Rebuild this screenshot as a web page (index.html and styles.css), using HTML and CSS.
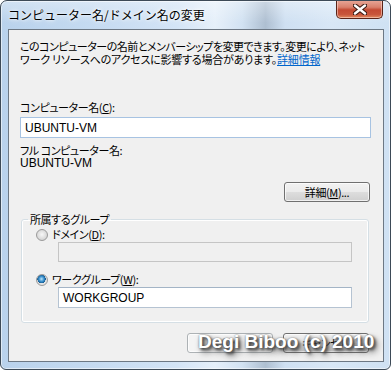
FILE: index.html
```html
<!DOCTYPE html>
<html lang="ja">
<head>
<meta charset="utf-8">
<link rel="stylesheet" href="styles.css">
</head>
<body>
<div class="window">
  <div class="titlebar">
    <span class="title">コンピューター名/ドメイン名の変更</span>
    <span class="close">
      <svg width="14" height="11" viewBox="0 0 14 11">
        <path d="M2 1.5 L12 9.5 M12 1.5 L2 9.5" stroke="#3d1b14" stroke-width="4.6" stroke-linecap="round"/>
        <path d="M2 1.5 L12 9.5 M12 1.5 L2 9.5" stroke="#ffffff" stroke-width="2.4" stroke-linecap="round"/>
      </svg>
    </span>
  </div>
  <div class="client">
    <p class="intro"><span class="line1">このコンピューターの名前とメンバーシップを変更できます。変更により、ネット</span><br><span class="line2">ワーク リソースへのアクセスに影響する場合があります。<a class="link">詳細情報</a></span></p>
    <div class="label name-label">コンピューター名(<u>C</u>):</div>
    <div class="textbox focused">UBUNTU-VM</div>
    <div class="label full-label">フル コンピューター名:</div>
    <div class="label value">UBUNTU-VM</div>
    <div class="more-row"><span class="btn more">詳細(<u>M</u>)...</span></div>
    <fieldset class="group">
      <legend class="legend">所属するグループ</legend>
      <div class="radio-row"><span class="radio"></span><span class="label">ドメイン(<u>D</u>):</span></div>
      <div class="textbox inset disabled"></div>
      <div class="radio-row second"><span class="radio checked"></span><span class="label">ワークグループ(<u>W</u>):</span></div>
      <div class="textbox inset">WORKGROUP</div>
    </fieldset>
    <div class="actions">
      <span class="btn disabled">OK</span>
      <span class="btn">キャンセル</span>
    </div>
  </div>
  <div class="watermark">Degi Biboo (c) 2010</div>
</div>
</body>
</html>
```
FILE: styles.css
```css
html, body {
  margin: 0;
  padding: 0;
  background: #ffffff;
}

.window {
  position: relative;
  width: 391px;
  height: 370px;
  box-sizing: border-box;
  border: 1px solid #3d4a57;
  border-radius: 7px 7px 6px 6px;
  padding: 0 6px 7px 7px;
  display: flex;
  flex-direction: column;
  background:
    linear-gradient(to bottom, rgba(255,255,255,0.35), rgba(255,255,255,0) 22px),
    linear-gradient(to right, #b9d2ec 0%, #c6dbf1 25%, #d3e4f6 45%, #e6f0fa 55%, #d2e2f2 62%, #aebfd1 68%, #cfe0f2 73%, #d8e7f6 85%, #cfe1f3 100%);
  box-shadow: inset 0 0 0 1px rgba(255,255,255,0.55);
  font-family: "Noto Sans CJK JP", "Noto Sans", sans-serif;
  overflow: hidden;
}

.titlebar {
  height: 28px;
  display: flex;
  justify-content: space-between;
  align-items: flex-start;
  flex: none;
}

.title {
  margin-top: 6px;
  font-size: 12px;
  line-height: 16px;
  color: #000;
  text-shadow: 0 0 6px #ffffff, 0 0 3px #ffffff;
}

.close {
  margin-top: -1px;
  margin-right: 1px;
  width: 47px;
  height: 19px;
  box-sizing: border-box;
  border: 1px solid #5a2418;
  border-top: none;
  border-radius: 0 0 5px 5px;
  background: linear-gradient(to bottom, #e9a99a 0%, #d9806c 40%, #c44a33 55%, #c8553b 80%, #e08a5e 100%);
  box-shadow: inset 0 0 0 1px rgba(255,220,210,0.55);
  display: flex;
  align-items: center;
  justify-content: center;
}

.client {
  flex: 1;
  min-width: 0;
  overflow: hidden;
  box-sizing: border-box;
  border: 1px solid #6d7884;
  background: #f0f0f0;
  padding: 10px 12px 0 11px;
  display: flex;
  flex-direction: column;
  font-size: 11px;
  line-height: 13px;
  letter-spacing: -0.4px;
  color: #000;
  font-feature-settings: "palt";
}

.intro {
  margin: 0;
  white-space: nowrap;
}

.line1 {
  letter-spacing: -0.5px;
}

.line2 {
  letter-spacing: -0.2px;
}

.link {
  color: #0066cc;
  text-decoration: underline;
}

.label {
  line-height: 13px;
}

.name-label {
  margin-top: 35px;
}

.textbox {
  height: 21px;
  box-sizing: border-box;
  margin-top: 3px;
  background: #ffffff;
  border: 1px solid #b5c3d2;
  border-top-color: #a3b4c6;
  padding: 3px 0 0 4px;
  font-family: "Liberation Sans", sans-serif;
  font-size: 12px;
  line-height: 14px;
  letter-spacing: 0;
}

.focused {
  border-color: #a7c3e2;
}

.full-label {
  margin-top: 6px;
}

.value {
  font-family: "Liberation Sans", sans-serif;
  font-size: 12px;
  letter-spacing: 0;
}

.more-row {
  display: flex;
  justify-content: flex-end;
  margin-top: 12px;
  padding-right: 1px;
}

.btn {
  width: 86px;
  height: 20px;
  box-sizing: border-box;
  border: 1px solid #707070;
  border-radius: 3px;
  background: linear-gradient(to bottom, #f2f2f2 0%, #ebebeb 48%, #dddddd 52%, #cfcfcf 100%);
  box-shadow: inset 0 0 0 1px rgba(255,255,255,0.7);
  display: flex;
  align-items: center;
  justify-content: center;
  line-height: 13px;
}

.btn.disabled {
  border-color: #adb2b5;
  background: #f4f4f4;
  color: #8c8c8c;
  font-family: "Liberation Sans", sans-serif;
  font-size: 12px;
  letter-spacing: 0;
}

.group {
  margin: 11px 2px 0 1px;
  padding: 0 0 14px 0;
  border: 1px solid #d5dfe5;
  border-radius: 3px;
  box-shadow: inset 0 0 0 1px #ffffff;
  min-width: 0;
}

.legend {
  margin-left: 6px;
  padding: 0 2px;
  line-height: 13px;
}

.radio-row {
  display: flex;
  align-items: center;
  gap: 4px;
  margin-left: 14px;
  margin-top: 2px;
}

.radio-row.second {
  margin-top: 11px;
}

.radio {
  width: 12px;
  height: 12px;
  box-sizing: border-box;
  border-radius: 50%;
  border: 1px solid #9a9a9a;
  background: radial-gradient(circle at 50% 45%, #f8f8f8 0%, #e2e2e2 45%, #c9c9c9 100%);
}

.radio.checked {
  background:
    radial-gradient(circle at 45% 40%, #bfe6fb 0%, #3d93cf 30%, #175e96 50%, transparent 53%),
    radial-gradient(circle, #f2f2f2 0%, #d8d8d8 100%);
}

.inset {
  margin-left: 36px;
  margin-right: 16px;
  margin-top: 1px;
}

.textbox.disabled {
  height: 20px;
  background: #f0f0f0;
  border-color: #c5c5c5;
}

.actions {
  display: flex;
  justify-content: flex-end;
  gap: 10px;
  margin-top: 10px;
  padding-right: 2px;
}

.watermark {
  position: absolute;
  left: 197px;
  top: 330px;
  font-family: "Liberation Sans", sans-serif;
  font-weight: bold;
  font-size: 19px;
  line-height: 22px;
  color: #ffffff;
  text-shadow: 2px 2px 3px #3a3a3a, 3px 4px 6px #555555, 0 0 2px #777777;
  white-space: nowrap;
}
```
